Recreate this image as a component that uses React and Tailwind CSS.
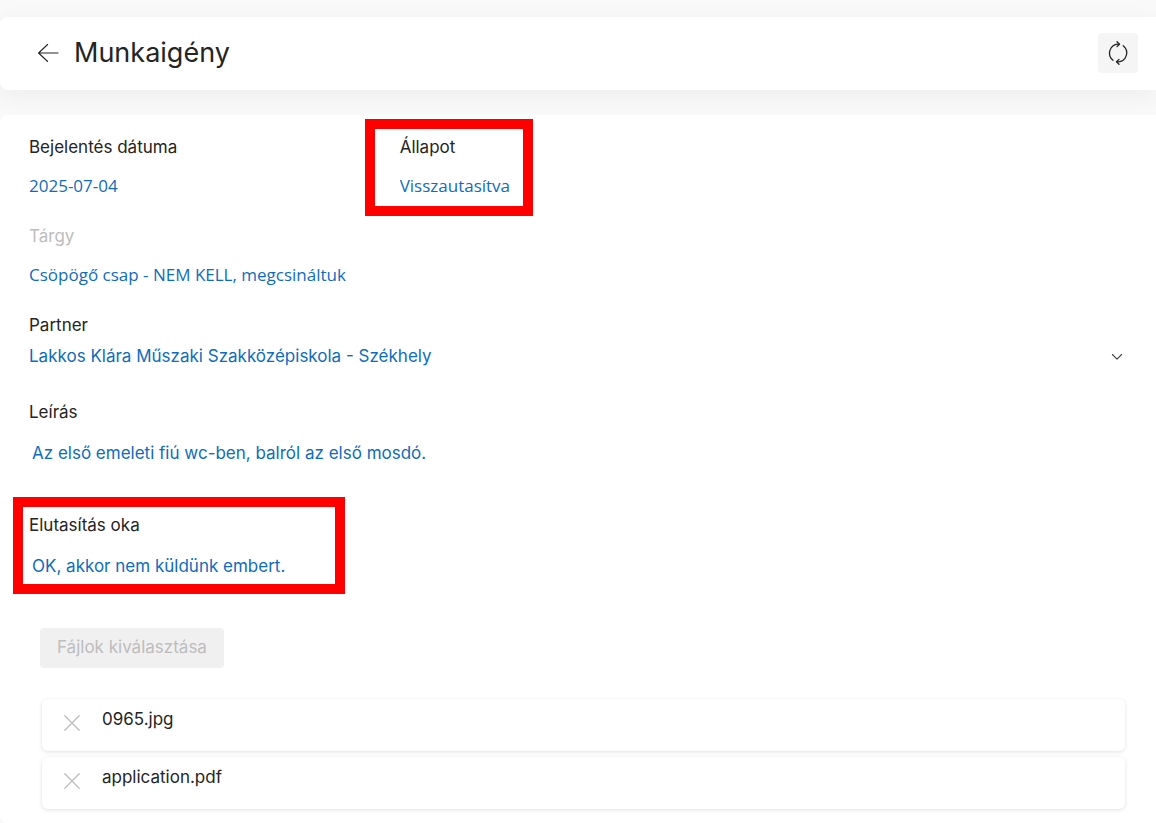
import { useId } from 'react';
import clsx from 'clsx';

const files = ['0965.jpg', 'application.pdf'];

const BackIcon = () => (
  <svg className="w-6 h-6" viewBox="0 0 24 24" fill="none" stroke="currentColor" strokeWidth="1.1" strokeLinecap="round" strokeLinejoin="round">
    <path d="M22 12H2.6M11.6 3.5L2.6 12l9 8.5" />
  </svg>
);

const RefreshIcon = () => (
  <svg className="w-6 h-6" viewBox="0 0 24 24" fill="none" stroke="currentColor" strokeWidth="1.3" strokeLinecap="round" strokeLinejoin="round">
    <path d="M7 19.2A9 9 0 0 1 12 3.1h1" />
    <path d="M11 .8l2.5 2.4L11 5.6" />
    <path d="M17.2 4.8A9 9 0 0 1 12 20.9h-1" />
    <path d="M13 18.4l-2.5 2.4 2.5 2.4" />
  </svg>
);

const ChevronIcon = () => (
  <svg className="w-3 h-3" viewBox="0 0 12 12" fill="none" stroke="currentColor" strokeWidth="1.1" strokeLinecap="round" strokeLinejoin="round">
    <path d="M1.4 3.5L6 8.1l4.6-4.6" />
  </svg>
);

const RemoveIcon = () => (
  <svg className="w-4 h-4" viewBox="0 0 16 16" fill="none" stroke="currentColor" strokeWidth="1.3" strokeLinecap="round">
    <path d="M.8 .8l14.4 14.4M15.2 .8L.8 15.2" />
  </svg>
);

const Label = ({ htmlFor, muted, children }) => (
  <label htmlFor={htmlFor} className={clsx('h-6 self-start leading-6', muted ? 'text-[#bdbdbd]' : 'text-[#242424]')}>
    {children}
  </label>
);

const TextField = ({ label, value, muted }) => {
  const id = useId();
  return (
    <div className="flex flex-col gap-2">
      <Label htmlFor={id} muted={muted}>{label}</Label>
      <input
        id={id}
        type="text"
        readOnly
        value={value}
        className="h-9 w-full bg-transparent font-['Open_Sans','Noto_Sans',sans-serif] text-[17px] text-[#0f6cbd] outline-none"
      />
    </div>
  );
};

const SelectField = ({ label, value }) => {
  const id = useId();
  return (
    <div className="flex flex-col">
      <Label htmlFor={id}>{label}</Label>
      <div className="grid items-center">
        <select id={id} defaultValue={value} className="col-start-1 row-start-1 h-10 w-full appearance-none bg-transparent text-[#0f6cbd] outline-none">
          <option value={value}>{value}</option>
        </select>
        <span className="col-start-1 row-start-1 justify-self-end pr-0.5 text-[#424242] pointer-events-none">
          <ChevronIcon />
        </span>
      </div>
    </div>
  );
};

const TextAreaField = ({ label, value }) => {
  const id = useId();
  return (
    <div className="flex flex-col gap-2">
      <Label htmlFor={id}>{label}</Label>
      <textarea
        id={id}
        readOnly
        value={value}
        className="h-[62px] w-full resize-none bg-transparent px-[3px] py-[9px] leading-6 text-[#0f6cbd] outline-none"
      />
    </div>
  );
};

// Red frame drawn over a field to call it out
const Highlight = ({ className, children }) => (
  <div className="relative">
    {children}
    <div className={clsx('absolute h-[97px] border-[10px] border-[#ff0000] pointer-events-none', className)} />
  </div>
);

const FileRow = ({ name }) => (
  <li className="flex h-[52px] items-start rounded-md bg-white px-[22px] shadow-[0_1px_4px_rgba(0,0,0,0.12)]">
    <button type="button" aria-label={`Törlés: ${name}`} className="mt-4 text-[#bdbdbd]">
      <RemoveIcon />
    </button>
    <span className="ml-[22px] mt-2 leading-6 text-[#242424]">{name}</span>
  </li>
);

const App = () => (
  <div className="flex min-h-screen flex-col overflow-x-hidden bg-[#f9f9f9] pt-[17px] font-['Inter',sans-serif] text-[17px] text-[#242424]">
    <header className="flex h-[73px] items-center rounded-l-lg bg-white pb-0.5 pl-9 pr-[18px] shadow-[0_6px_24px_rgba(0,0,0,0.05)]">
      <button type="button" aria-label="Vissza">
        <BackIcon />
      </button>
      <h1 className="ml-3.5 text-[27px] leading-9">Munkaigény</h1>
      <button type="button" aria-label="Frissítés" className="ml-auto flex h-10 w-10 items-center justify-center rounded bg-[#f5f5f5]">
        <RefreshIcon />
      </button>
    </header>

    <main className="relative mt-[25px] flex-1 rounded-l-lg bg-white pl-[29px] pr-[31px] pt-5 pb-3.5">
      <div className="flex flex-col gap-[21px]">
        <div className="grid grid-cols-3 gap-x-4">
          <TextField label="Bejelentés dátuma" value="2025-07-04" />
          <Highlight className="-left-[35px] -top-4 w-[168px]">
            <TextField label="Állapot" value="Visszautasítva" />
          </Highlight>
        </div>
        <TextField label="Tárgy" value="Csöpögő csap - NEM KELL, megcsináltuk" muted />
        <SelectField label="Partner" value="Lakkos Klára Műszaki Szakközépiskola - Székhely" />
      </div>

      <div className="mt-[23px] flex flex-col gap-[19px]">
        <TextAreaField label="Leírás" value="Az első emeleti fiú wc-ben, balról az első mosdó." />
        <Highlight className="-left-4 -top-4 w-[332px]">
          <TextAreaField label="Elutasítás oka" value="OK, akkor nem küldünk embert." />
        </Highlight>
      </div>

      <section className="mt-[21px] pl-[11px]">
        <button type="button" disabled className="h-10 rounded bg-[#f0f0f0] px-[17px] text-[#bdbdbd]">
          Fájlok kiválasztása
        </button>
        <ul className="ml-0.5 mt-[31px] flex flex-col gap-1.5">
          {files.map((name) => (
            <FileRow key={name} name={name} />
          ))}
        </ul>
      </section>
    </main>
  </div>
);

export default App;
